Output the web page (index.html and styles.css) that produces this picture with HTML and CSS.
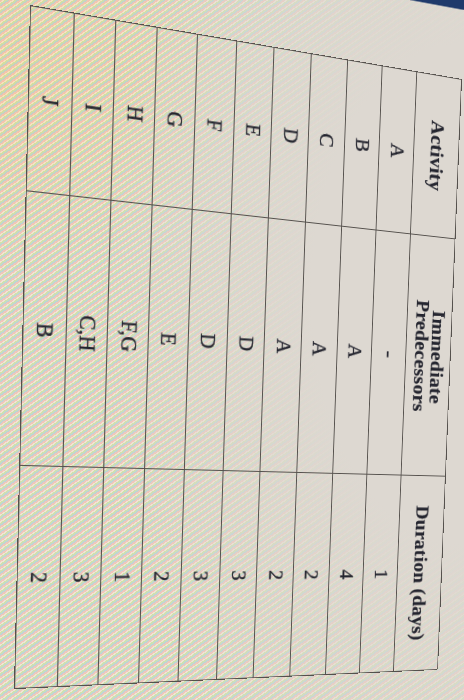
FILE: index.html
```html
<!DOCTYPE html>
<html lang="en">
<head>
<meta charset="utf-8">
<title>Activity table</title>
<link rel="stylesheet" href="styles.css">
</head>
<body>
<div class="sheet">
  <div class="cell head">Activity</div>
  <div class="cell head">Immediate<br>Predecessors</div>
  <div class="cell head">Duration (days)</div>

  <div class="cell">A</div><div class="cell">-</div><div class="cell">1</div>
  <div class="cell">B</div><div class="cell">A</div><div class="cell">4</div>
  <div class="cell">C</div><div class="cell">A</div><div class="cell">2</div>
  <div class="cell">D</div><div class="cell">A</div><div class="cell">2</div>
  <div class="cell">E</div><div class="cell">D</div><div class="cell">3</div>
  <div class="cell">F</div><div class="cell">D</div><div class="cell">3</div>
  <div class="cell">G</div><div class="cell">E</div><div class="cell">2</div>
  <div class="cell">H</div><div class="cell">F,G</div><div class="cell">1</div>
  <div class="cell">I</div><div class="cell">C,H</div><div class="cell">3</div>
  <div class="cell">J</div><div class="cell">B</div><div class="cell">2</div>
</div>
</body>
</html>
```
FILE: styles.css
```css
html, body {
  margin: 0;
  padding: 0;
  width: 464px;
  height: 700px;
  overflow: hidden;
}

body {
  font-family: "Liberation Serif", "Times New Roman", serif;
  color: #24252f;
  background:
    linear-gradient(to bottom left, #1f3a6b 46%, transparent 54%) right top / 54px 10px no-repeat,
    radial-gradient(ellipse 78% 85% at 100% 42%, #ddd8d1 42%, rgba(221, 216, 209, 0.7) 62%, rgba(221, 216, 209, 0) 100%),
    repeating-linear-gradient(145deg,
      rgba(244, 190, 180, 0.7) 0 1.6px,
      rgba(252, 238, 214, 0.55) 1.6px 2.8px,
      rgba(196, 230, 160, 0.7) 2.8px 4.2px,
      rgba(168, 212, 216, 0.65) 4.2px 5.6px),
    radial-gradient(ellipse 65% 35% at 0% 10%, #f5cd92 0%, #edd2b0 45%, rgba(230, 212, 198, 0) 85%),
    linear-gradient(to bottom, #e2dbd3 0%, #e6d6cc 60%, #e3d9d0 100%);
}

/* The sheet is laid out sideways (text turned a quarter clockwise),
   then tilted in perspective like the photographed page. */
.sheet {
  box-sizing: border-box;
  width: 440px;
  height: 640px;
  writing-mode: vertical-rl;
  display: grid;
  grid-template-columns: 170px 257px 213px;
  grid-template-rows: 52px repeat(10, 1fr);
  border-block-start: 1.6px solid #55514d;
  border-inline-start: 1.6px solid #55514d;
  transform-origin: 0 0;
  transform: matrix3d(1.14827, 0.196644, 0, 0.00036028,
                      -0.0243909, 1.097117, 0, 0.0000435,
                      0, 0, 1, 0,
                      30, 5, 0, 1);
}

.cell {
  display: flex;
  align-items: center;
  justify-content: center;
  text-align: center;
  font-size: 21px;
  line-height: 1;
  -webkit-text-stroke: 0.35px #24252f;
  border-inline-end: 1.6px solid #55514d;
  border-block-end: 1.6px solid #55514d;
}

.head {
  font-weight: bold;
  line-height: 0.95;
  letter-spacing: 0.4px;
  -webkit-text-stroke: 0.2px #24252f;
}
```
